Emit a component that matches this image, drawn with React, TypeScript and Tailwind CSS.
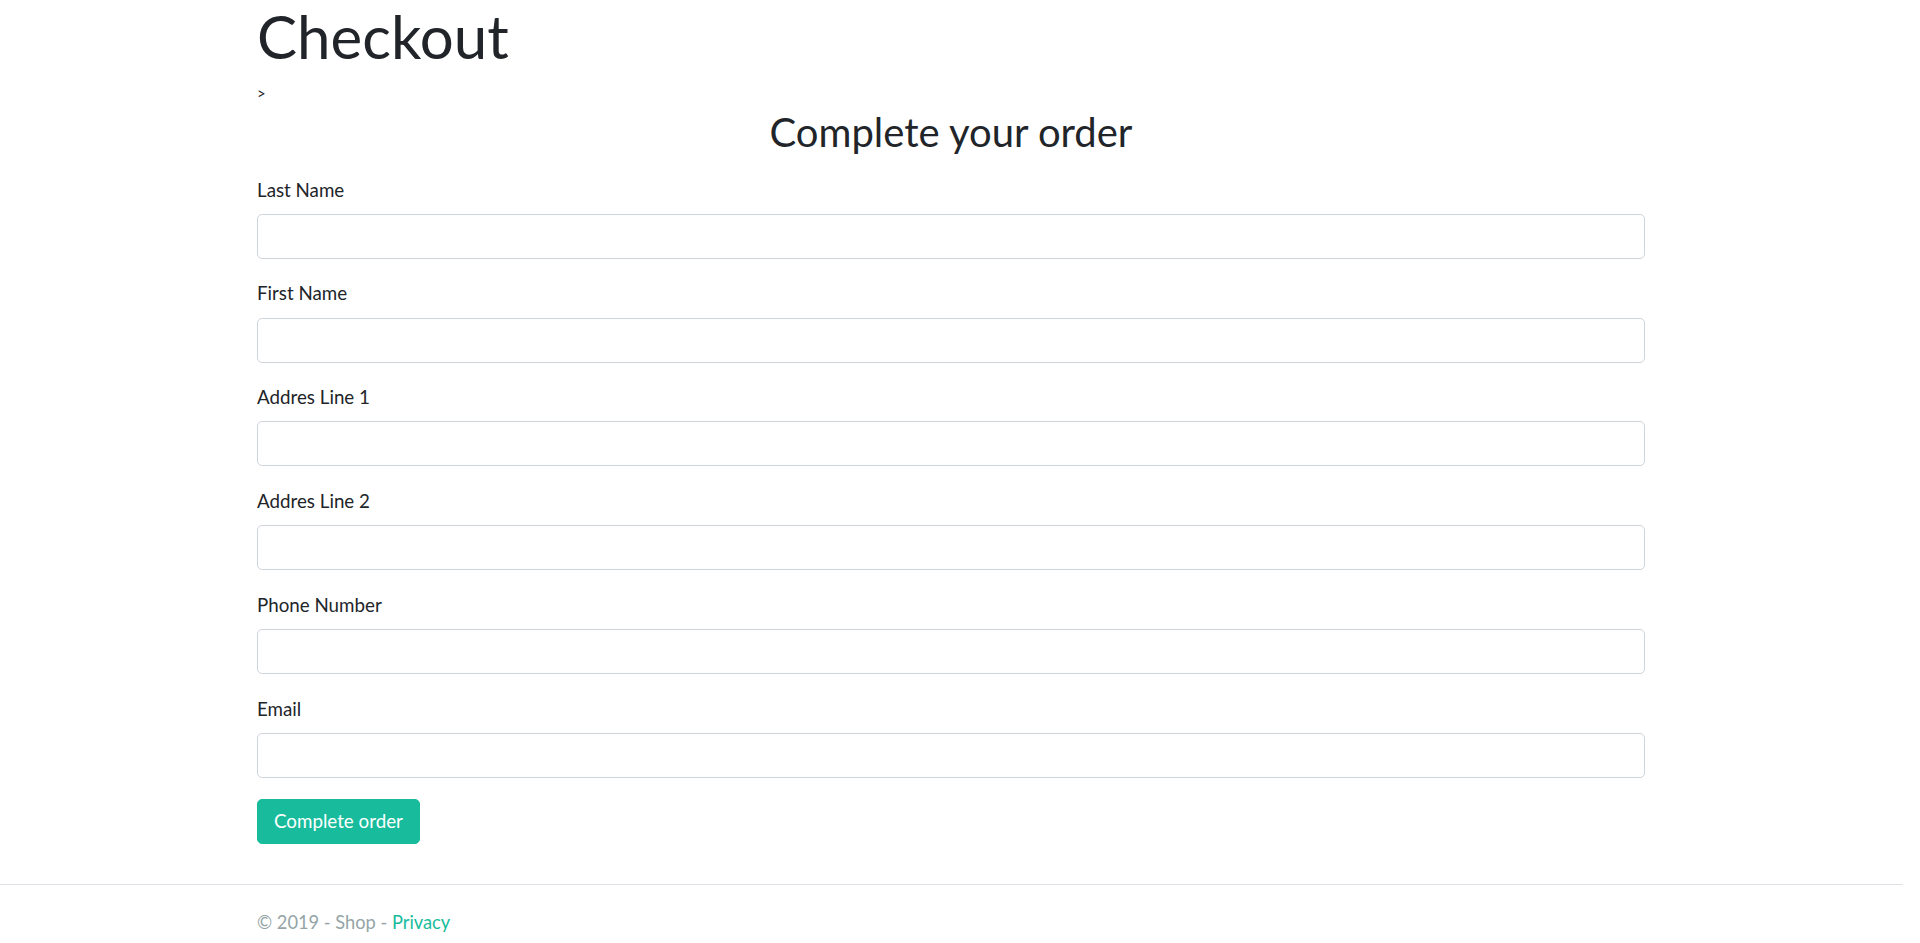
import React from "react";

const fields = [
  "Last Name",
  "First Name",
  "Addres Line 1",
  "Addres Line 2",
  "Phone Number",
  "Email",
];

export default function App() {
  return (
    <div
      className="w-[1903px] h-[943px] overflow-hidden bg-white text-[#212529] flex flex-col"
      style={{ fontFamily: "Lato, 'Open Sans', sans-serif" }}
    >
      <div className="w-[1388px] ml-[257px] flex-1">
        <h1 className="text-[60px] leading-[72px] font-normal m-0 mb-[10px]">Checkout</h1>
        <div className="text-[15px] leading-[22.5px]">&gt;</div>
        <h3 className="text-[40px] leading-[48px] font-normal text-center mt-[3px] mb-[20px]">
          Complete your order
        </h3>
        <form className="flex flex-col">
          {fields.map((f) => (
            <div key={f} className="mb-[20.75px]">
              <label className="block text-[18.75px] leading-[28.125px] mb-[10px]">{f}</label>
              <input
                type="text"
                className="block w-full h-[45px] border border-[#ced4da] rounded-[5px] bg-white px-[15px] text-[18.75px] outline-none"
              />
            </div>
          ))}
          <div>
            <button
              type="button"
              className="h-[45px] px-[16px] rounded-[5px] bg-[#18bc9c] border border-[#18bc9c] text-white text-[18.75px] leading-[28.125px]"
            >
              Complete order
            </button>
          </div>
        </form>
      </div>
      <footer className="h-[59px] border-t border-[#dee2e6] shrink-0">
        <div className="w-[1388px] ml-[257px] pt-[23px] text-[18.25px] leading-[28px] text-[#95a5a6] whitespace-nowrap">
          © 2019 - Shop - <a className="text-[#18bc9c]">Privacy</a>
        </div>
      </footer>
    </div>
  );
}
